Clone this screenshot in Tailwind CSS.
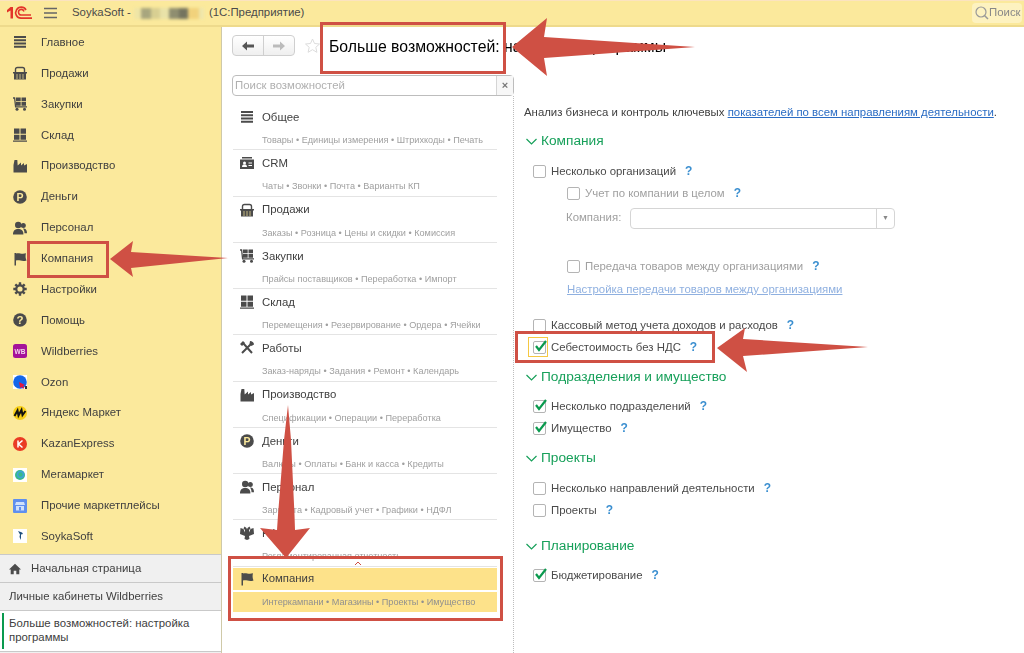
<!DOCTYPE html>
<html lang="ru">
<head>
  <meta charset="UTF-8" />
  <meta name="viewport" content="width=device-width, initial-scale=1.0"/>
  <title>Больше возможностей: настройка программы</title>
  <script src="https://cdn.jsdelivr.net/npm/@tailwindcss/browser@4"></script>
</head>
<body class="bg-white font-['Liberation_Sans',Arial,sans-serif] text-[#404040]">
  <!-- shared icons -->
  <svg class="hidden">
    <symbol id="i-main" viewBox="0 0 14 14"><path fill="#4b4b4b" d="M1 1h12v2H1zM1 4.200h12v2H1zM1 7.500h12v2H1zM1 10.800h12v2H1z"/></symbol>
    <symbol id="i-basket" viewBox="0 0 14 14"><path fill="#4b4b4b" d="M0 6h14v1.500h-1V13.500H1V7.500H0z"/><path fill="none" stroke="#4b4b4b" stroke-width="1.400" d="M2.500 6V3.500Q2.500 1.500 4.500 1.500h5q2 0 2 2V6"/><path stroke="#fbe99c" stroke-width=".7" d="M4 8v5M7 8v5M10 8v5"/></symbol>
    <symbol id="i-cart" viewBox="0 0 14 14"><path fill="#4b4b4b" d="M3 .5h4.700v3.700H3zM8.500.5H13v3.700H8.500zM3 5h4.700v3.700H3zM8.500 5H13v3.700H8.500z"/><path fill="none" stroke="#4b4b4b" stroke-width="1.300" d="M0 1h1.600l1 8.800H14"/><circle cx="4" cy="12.300" r="1.500" fill="#4b4b4b"/><circle cx="11.500" cy="12.300" r="1.500" fill="#4b4b4b"/></symbol>
    <symbol id="i-stock" viewBox="0 0 14 14"><path fill="#4b4b4b" d="M1 .5h5.500v5.300H1zM7.500.5H13v5.300H7.500zM1 6.800h5.500v5H1zM7.500 6.800H13v5H7.500zM0 12.500h14v1.300H0z"/></symbol>
    <symbol id="i-factory" viewBox="0 0 14 14"><path fill="#4b4b4b" d="M.5 13.500V6l1-5h2.800l.4 5.500 3.300-3V6.500l3-2.500v2.500l3-1.500v8.500z"/></symbol>
    <symbol id="i-coin" viewBox="0 0 14 14"><circle cx="7" cy="7" r="6.800" fill="#4b4b4b"/><text x="7" y="10.800" text-anchor="middle" font-size="10.500" font-weight="700" fill="#fbe99c" font-family="Liberation Sans">P</text></symbol>
    <symbol id="i-people" viewBox="0 0 14 14"><circle cx="5.200" cy="4" r="3.200" fill="#4b4b4b"/><path fill="#4b4b4b" d="M0 13.500c0-4 2-5.500 5.200-5.500s5.200 1.500 5.200 5.500z"/><circle cx="10.300" cy="4.500" r="2.500" fill="#4b4b4b"/><path fill="#4b4b4b" d="M10 7.500c2.500 0 4 1.300 4 4.800h-2.500c0-2.300-.6-3.500-1.500-4.800z"/></symbol>
    <symbol id="i-flag" viewBox="0 0 14 14"><path fill="#4b4b4b" d="M1.500 1H3v12.500H1.500zM3 1.500c3-1.200 5 1 10-.2-.7 2.500-.5 5 .5 7.200-4.500 1.500-7-1-10.500 0z"/></symbol>
    <symbol id="i-gear" viewBox="0 0 14 14"><circle cx="7" cy="7" r="3.700" fill="none" stroke="#4b4b4b" stroke-width="2.200"/><path stroke="#4b4b4b" stroke-width="2.400" d="M7 .3v2.700M7 11v2.700M.3 7H3M11 7h2.700M2.300 2.300l1.900 1.900M9.800 9.800l1.900 1.900M11.700 2.300 9.800 4.200M4.200 9.800l-1.900 1.900"/></symbol>
    <symbol id="i-help" viewBox="0 0 14 14"><circle cx="7" cy="7" r="6.800" fill="#4b4b4b"/><text x="7" y="11" text-anchor="middle" font-size="11.500" font-weight="700" fill="#fbe99c" font-family="Liberation Sans">?</text></symbol>
    <symbol id="i-wb" viewBox="0 0 14 14"><rect width="14" height="14" rx="2.500" fill="#a5129a"/><text x="7" y="9.600" text-anchor="middle" font-size="6.500" font-weight="700" fill="#f3d6ee" font-family="Liberation Sans">WB</text></symbol>
    <symbol id="i-ozon" viewBox="0 0 14 14"><rect width="14" height="14" fill="#fff"/><circle cx="7" cy="7" r="6.800" fill="#1466e8"/><path fill="#e3173e" d="M6 7l6 3-2 1 1.500 2-1.500.8-1.300-2-1.500 1.500z"/><rect x="12" y="11" width="2" height="3" fill="#333"/></symbol>
    <symbol id="i-ya" viewBox="0 0 14 14"><circle cx="7" cy="7" r="7" fill="#f7cf17"/><path fill="none" stroke="#111" stroke-width="2" d="M1.500 10 4.500 4.500l1 5 3-5.500 1 5 3-4"/></symbol>
    <symbol id="i-ke" viewBox="0 0 14 14"><circle cx="7" cy="7" r="7" fill="#ea3b24"/><path fill="none" stroke="#fff" stroke-width="1.500" d="M5 3.500v7M9.500 3.500 5.500 7l4 3.500"/></symbol>
    <symbol id="i-mega" viewBox="0 0 14 14"><rect width="14" height="14" fill="#fff"/><circle cx="7" cy="7" r="5" fill="#39b98a"/><circle cx="7.500" cy="6.500" r="3" fill="none" stroke="#3fa3d8" stroke-width="1.500"/></symbol>
    <symbol id="i-other" viewBox="0 0 14 14"><rect width="14" height="14" rx="1" fill="#5f8fee"/><path fill="#cfe0fb" d="M3 3h8l1 3H2zM3 7h8v4.500H3z"/><rect x="6" y="8" width="2" height="3.500" fill="#5f8fee"/></symbol>
    <symbol id="i-soyka" viewBox="0 0 14 14"><rect width="14" height="14" fill="#fff"/><path fill="#1f4f7d" d="M5 2l4 1.500 1 1.500-2 .5L8 11 6.500 8l.5-2.500z"/></symbol>
    <symbol id="i-crm" viewBox="0 0 14 14"><path fill="#4b4b4b" d="M2 1h10v1.500H2zM0 3.500h14V13H0z"/><circle cx="4.500" cy="7" r="1.500" fill="#fff"/><path fill="#fff" d="M2 11c0-2 1-2.500 2.500-2.500S7 9 7 11zM8.500 6.500H12v1H8.500zM8.500 9H12v1H8.500z"/></symbol>
    <symbol id="i-tools" viewBox="0 0 14 14"><path fill="none" stroke="#4b4b4b" stroke-width="2" d="M2 12 11 3M3 2l9 10"/><path fill="#4b4b4b" d="M0 3l3-3 2 2-3 3zM10 0c2 0 4 1.500 4 3.500L11.500 5 9.500 3z"/></symbol>
    <symbol id="i-eagle" viewBox="0 0 14 14"><path fill="#4b4b4b" d="M4.500.5 6.500 2 7 3.500 7.500 2 9.500.5l1 2L9 4v2.500l1.500-3.500L13.500 2 14 8l-2.500 1L9 10l.5 3L7 14l-2.500-1 .5-3-2.500-1L0 8l.5-6L3.500 3 5 6.500V4L3.500 2.500z"/></symbol>
    <symbol id="i-home" viewBox="0 0 14 14"><path fill="#4b4b4b" d="M7 1 0 7.500h2V13h3.500V9h3v4H12V7.500h2z"/></symbol>
  </svg>

  <div class="relative w-[1024px] h-[653px] overflow-hidden flex flex-col blur-[0.3px]">
    <!-- top bar -->
    <header class="h-[27px] shrink-0 flex items-center bg-[#fbe99c] border-t border-t-[#fbe3c0] border-b-2 border-b-[#eeda8c]">
      <svg class="ml-[7px] w-[25px] h-[14px]" viewBox="0 0 25 14">
        <path fill="#e3342a" d="M0 4 3.500 1H6V12.500H3.500V4.500L0 6.500z"/>
        <path fill="none" stroke="#e3342a" stroke-width="1.700" d="M19 4A5.500 5.500 0 1 0 14 12.200H25"/>
        <path fill="none" stroke="#e3342a" stroke-width="1.500" d="M17 5.500A2.800 2.800 0 1 0 14.500 9H24"/>
      </svg>
      <svg class="ml-[12px] w-[13px] h-[12px]" viewBox="0 0 13 12"><path stroke="#666" stroke-width="1.500" d="M0 1.500h13M0 6h13M0 10.500h13"/></svg>
      <span class="ml-[15px] text-[11.4px] text-[#4a4a4a]">SoykaSoft -</span>
      <div class="ml-[3px] flex h-[11px] w-[70px] blur-[1.5px]">
        <div class="w-[7px] bg-[#efe5a6]"></div><div class="w-[10px] bg-[#a8a67e]"></div><div class="w-[9px] bg-[#d8cf92]"></div><div class="w-[9px] bg-[#e9e2a8]"></div><div class="w-[10px] bg-[#8f8e70]"></div><div class="w-[9px] bg-[#75745f]"></div><div class="w-[11px] bg-[#f1d27c]"></div><div class="w-[5px] bg-[#efe6ab]"></div>
      </div>
      <span class="ml-[5px] text-[11.4px] text-[#4a4a4a]">(1С:Предприятие)</span>
      <div class="ml-auto mr-[2px] w-[50px] h-[20px] flex items-center bg-[#fdf2c0] rounded-sm">
        <svg class="ml-[3px] w-[14px] h-[14px]" viewBox="0 0 14 14"><circle cx="6" cy="6" r="5" fill="none" stroke="#999" stroke-width="1.200"/><path stroke="#999" stroke-width="1.500" d="M9.500 9.500 13 13"/></svg>
        <span class="text-[11.4px] text-[#888]">Поиск</span>
      </div>
    </header>

    <div class="flex flex-1 min-h-0">
      <!-- left panel -->
      <aside class="w-[222px] shrink-0 flex flex-col border-r border-r-[#cfc9a8] text-[11.4px]">
        <nav id="sections" class="h-[527px] bg-[#fbe99c] overflow-hidden"></nav>
        <div class="h-[28px] flex items-center bg-[#f0f0f0] border-t border-[#c9c9c9]">
          <svg class="ml-[9px] w-[12px] h-[12px]"><use href="#i-home"/></svg>
          <span class="ml-[10px]">Начальная страница</span>
        </div>
        <div class="h-[28px] flex items-center bg-[#f0f0f0] border-t border-[#c9c9c9] pl-[9px]">Личные кабинеты Wildberries</div>
        <div class="relative h-[41px] pl-[9px] pt-[5px] bg-white border-t border-[#c9c9c9] leading-[14px]">
          <div class="absolute left-[2px] top-[2px] w-[2px] h-[36px] bg-[#0a9a4e]"></div>
          Больше возможностей: настройка<br>программы
        </div>
        <div class="flex-1 bg-[#f0f0f0] border-t border-[#c9c9c9]"></div>
      </aside>

      <main class="flex-1 min-w-0 pl-[10px] flex flex-col">
        <!-- nav buttons and title -->
        <div class="mt-[8px] h-[21px] flex items-center">
          <div class="w-[63px] h-[21px] flex rounded-sm border border-[#cfcfcf] bg-gradient-to-b from-white to-[#efefef]">
            <div class="w-[31px] flex items-center justify-center border-r border-[#cfcfcf]">
              <svg class="w-[12px] h-[10px]" viewBox="0 0 12 10"><path fill="#555" d="M0 5l5-4.500V3.500h7v3H5v3z"/></svg>
            </div>
            <div class="flex-1 flex items-center justify-center">
              <svg class="w-[12px] h-[10px]" viewBox="0 0 12 10"><path fill="#bbb" d="M12 5 7 .5V3.500H0v3h7v3z"/></svg>
            </div>
          </div>
          <svg class="ml-[10px] w-[15px] h-[15px]" viewBox="0 0 15 15"><path fill="none" stroke="#dcdcdc" d="M7.500 1l2 4.500 5 .5-3.700 3.300 1.100 5-4.400-2.600L3.100 14.300l1.100-5L.5 6l5-.5z"/></svg>
          <h1 class="ml-[9px] mt-[2px] text-[15.8px] font-normal text-black whitespace-nowrap">Больше возможностей: настройка программы</h1>
        </div>

        <!-- search -->
        <div class="mt-[19px] w-[282px] h-[21px] flex border border-[#bdbdbd] rounded-sm text-[11.4px]">
          <div class="flex-1 pl-[2px] leading-[19px] text-[#b0b0b0]">Поиск возможностей</div>
          <div class="w-[17px] flex items-center justify-center border-l border-[#d5d5d5] bg-[#f7f7f7] text-[11px] font-bold text-[#777]">×</div>
        </div>

        <div class="flex flex-1 min-h-0">
          <!-- groups -->
          <div id="groups" class="w-[281px] pt-[8px] pl-px pr-[16px] overflow-hidden shrink-0"></div>

          <!-- options -->
          <section class="flex-1 pt-[8px] pl-[10px] border-l border-dotted border-[#bdbdbd] text-[11.4px] text-[#4a4a4a]">
            <p class="h-[16px] leading-[16px] whitespace-nowrap text-[#404040]">Анализ бизнеса и контроль ключевых <a class="text-[#2a6cc4] underline">показателей по всем направлениям деятельности</a>.</p>
            <div id="options"></div>
          </section>
        </div>
      </main>
    </div>

    <!-- annotations drawn over the screenshot -->
    <svg class="absolute inset-0 w-[1024px] h-[653px] pointer-events-none" viewBox="0 0 1024 653">
      <g fill="none" stroke="#cf5044" stroke-width="3">
        <rect x="321.500" y="23.500" width="183" height="49" />
        <rect x="28.500" y="242.500" width="79" height="34" />
        <rect x="516.500" y="332.500" width="197" height="29" />
        <rect x="229.500" y="557.500" width="272" height="62" />
      </g>
      <g fill="#cf5044">
        <path d="M512 47 547 18 544 37 695 47 544 58 547 76z"/>
        <path d="M110 259 133 241 131 252 228 258 131 268 133 277z"/>
        <path d="M717 348 745 328 743 339 868 347 743 356 747 372z"/>
        <path d="M288 405 284 440 278 515 277 530 260 528 286 558 310 528 295 530 294.500 515 291 440z"/>
      </g>
      <path fill="none" stroke="#cf5044" d="M355 565l3-3 3 3"/>
    </svg>
  </div>

  <script>
    const sections = [
      ['i-main', 'Главное'], ['i-basket', 'Продажи'], ['i-cart', 'Закупки'], ['i-stock', 'Склад'],
      ['i-factory', 'Производство'], ['i-coin', 'Деньги'], ['i-people', 'Персонал'], ['i-flag', 'Компания'],
      ['i-gear', 'Настройки'], ['i-help', 'Помощь'], ['i-wb', 'Wildberries'], ['i-ozon', 'Ozon'],
      ['i-ya', 'Яндекс Маркет'], ['i-ke', 'KazanExpress'], ['i-mega', 'Мегамаркет'],
      ['i-other', 'Прочие маркетплейсы'], ['i-soyka', 'SoykaSoft']
    ];
    document.getElementById('sections').innerHTML = sections.map(([icon, name]) => `
      <div class="h-[30.875px] flex items-center pl-[13px]">
        <svg class="w-[14px] h-[14px] shrink-0"><use href="#${icon}"/></svg>
        <span class="ml-[14px]">${name}</span>
      </div>
    `).join('');

    const groups = [
      ['i-main', 'Общее', 'Товары • Единицы измерения • Штрихкоды • Печать'],
      ['i-crm', 'CRM', 'Чаты • Звонки • Почта • Варианты КП'],
      ['i-basket', 'Продажи', 'Заказы • Розница • Цены и скидки • Комиссия'],
      ['i-cart', 'Закупки', 'Прайсы поставщиков • Переработка • Импорт'],
      ['i-stock', 'Склад', 'Перемещения • Резервирование • Ордера • Ячейки'],
      ['i-tools', 'Работы', 'Заказ-наряды • Задания • Ремонт • Календарь'],
      ['i-factory', 'Производство', 'Спецификации • Операции • Переработка'],
      ['i-coin', 'Деньги', 'Валюты • Оплаты • Банк и касса • Кредиты'],
      ['i-people', 'Персонал', 'Зарплата • Кадровый учет • Графики • НДФЛ'],
      ['i-eagle', 'РФ', 'Регламентированная отчетность']
    ];
    const groupsEl = document.getElementById('groups');
    groupsEl.innerHTML = groups.map(([icon, name, sub]) => `
      <div class="h-[46.25px] border-b border-[#e4e4e4]">
        <div class="h-[26px] flex items-center pl-[7px] text-[11.4px]">
          <svg class="w-[14px] h-[14px] shrink-0"><use href="#${icon}"/></svg>
          <span class="ml-[8px] pt-px">${name}</span>
        </div>
        <div class="h-[20px] leading-[20px] pl-[29px] text-[9.15px] text-[#a0a0a0] whitespace-nowrap">${sub}</div>
      </div>
    `).join('') + `
      <div class="mt-[1px] h-[45px]">
        <div class="h-[22px] flex items-center pl-[7px] bg-[#fde28a] text-[11.4px] text-[#404040]">
          <svg class="w-[14px] h-[14px] shrink-0"><use href="#i-flag"/></svg>
          <span class="ml-[8px] pt-px">Компания</span>
        </div>
        <div class="mt-[2px] h-[20px] leading-[20px] pl-[29px] bg-[#fde28a] text-[9.15px] text-[#909090] whitespace-nowrap">Интеркампани • Магазины • Проекты • Имущество</div>
      </div>
      <div class="mt-[36px] flex text-[11.4px] pl-[8px]"><span>Настройки</span><span class="ml-[113px]">Сервис</span></div>
    `;

    const check = checked => `
      <span class="relative w-[13px] h-[13px] shrink-0 rounded-[2px] border border-[#b4b4b4] bg-white">
        ${checked ? '<svg class="absolute left-0 top-[-3px] w-[14px] h-[14px]" viewBox="0 0 14 14"><path fill="none" stroke="#0a9a4e" stroke-width="2.200" d="M2 7l3 4 7-9"/></svg>' : ''}
      </span>`;
    const ask = '<span class="font-bold text-[12px] text-[#3b8fd0]">?</span>';

    const row = (mt, pl, label, checked, muted, focused) => `
      <div class="${mt} h-[22px] flex items-center ${pl} ${muted ? 'text-[#a0a0a0]' : ''}">
        <span class="relative flex">
          ${focused ? '<span class="absolute left-[-5px] top-[-4px] w-[20px] h-[20px] border border-[#f5c842]"></span>' : ''}
          ${check(checked)}
        </span>
        <span class="ml-[5px] pt-px whitespace-nowrap">${label}</span>
        <span class="ml-[9px]">${ask}</span>
      </div>`;
    const heading = (mt, text) => `
      <div class="${mt} h-[22px] flex items-center text-[13.7px] text-[#17a05a]">
        <svg class="w-[11px] h-[7px] ml-[2px]" viewBox="0 0 11 7"><path fill="none" stroke="#17a05a" stroke-width="1.200" d="M.5 1 5.500 6l5-5"/></svg>
        <span class="ml-[4px] pt-px whitespace-nowrap">${text}</span>
      </div>`;

    document.getElementById('options').innerHTML = [
      heading('mt-[10px]', 'Компания'),
      row('mt-[8px]', 'pl-[9px]', 'Несколько организаций'),
      row('', 'pl-[43px]', 'Учет по компании в целом', false, true),
      `<div class="mt-[3px] h-[22px] flex items-center pl-[42px] text-[#a0a0a0]">
         <span class="w-[64px]">Компания:</span>
         <div class="w-[265px] h-[21px] flex justify-end border border-[#d5d5d5] rounded-sm">
           <div class="w-[18px] flex items-center justify-center border-l border-[#d5d5d5] text-[7px] text-[#888]">▼</div>
         </div>
       </div>`,
      row('mt-[26px]', 'pl-[43px]', 'Передача товаров между организациями', false, true),
      '<div class="mt-[1px] h-[22px] leading-[22px] pl-[43px] text-[#8fb0e0] underline whitespace-nowrap">Настройка передачи товаров между организациями</div>',
      row('mt-[14px]', 'pl-[9px]', 'Кассовый метод учета доходов и расходов'),
      row('', 'pl-[9px]', 'Себестоимость без НДС', true, false, true),
      heading('mt-[8px]', 'Подразделения и имущество'),
      row('mt-[7px]', 'pl-[9px]', 'Несколько подразделений', true),
      row('', 'pl-[9px]', 'Имущество', true),
      heading('mt-[8px]', 'Проекты'),
      row('mt-[8px]', 'pl-[9px]', 'Несколько направлений деятельности'),
      row('', 'pl-[9px]', 'Проекты'),
      heading('mt-[14px]', 'Планирование'),
      row('mt-[7px]', 'pl-[9px]', 'Бюджетирование', true)
    ].join('');
  </script>
</body>
</html>
